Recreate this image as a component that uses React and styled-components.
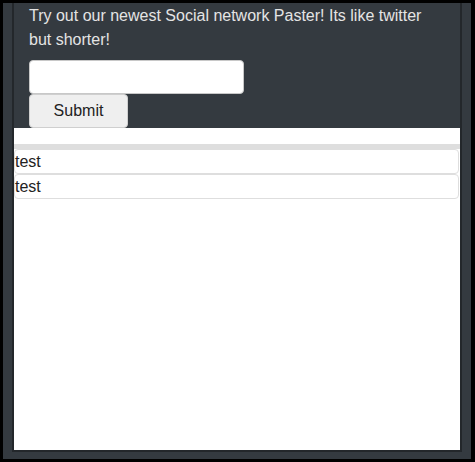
import React from 'react';
import styled, { createGlobalStyle } from 'styled-components';

const GlobalStyle = createGlobalStyle`
  html, body {
    margin: 0;
    padding: 0;
    background: #000;
  }
  body {
    font-family: "Liberation Sans", Arial, sans-serif;
  }
`;

const Frame = styled.div`
  box-sizing: border-box;
  width: 475px;
  height: 462px;
  border: solid #000;
  border-width: 3px 4px 3px 3px;
  background: #343a40;
  padding: 0 9px 7px 9px;
  display: flex;
  flex-direction: column;
`;

const Panel = styled.div`
  flex: 1;
  display: flex;
  flex-direction: column;
  border: 2px solid #23272b;
  border-top: none;
  background: #fff;
`;

const Header = styled.header`
  background: #343a40;
  padding: 1px 15px 0;
`;

const Intro = styled.p`
  margin: 0 0 8px;
  font-size: 16px;
  line-height: 24px;
  color: #e4e4e4;
`;

const Input = styled.input`
  display: block;
  box-sizing: border-box;
  width: 215px;
  height: 34px;
  margin: 0;
  border: 1px solid #c8c8c8;
  border-radius: 4px;
  background: #fff;
  font-size: 16px;
  font-family: inherit;
`;

const Button = styled.button`
  display: block;
  box-sizing: border-box;
  width: 99px;
  height: 34px;
  margin: 0;
  border: 1px solid #cfcfcf;
  border-radius: 4px;
  background: #efefef;
  color: #222;
  font-family: inherit;
  font-size: 16px;
`;

const Feed = styled.ul`
  list-style: none;
  margin: 16px 0 0;
  padding: 0;
  border-top: 5px solid #dedede;
`;

const Post = styled.li`
  margin-right: 1px;
  border: 1px solid #dedede;
  border-radius: 4px;
  font-size: 16px;
  line-height: 23px;
  color: #222;
`;

const posts = ['test', 'test'];

export default function App() {
  return (
    <>
      <GlobalStyle />
      <Frame>
        <Panel>
          <Header>
            <Intro>Try out our newest Social network Paster! Its like twitter but shorter!</Intro>
            <Input type="text" />
            <Button>Submit</Button>
          </Header>
          <Feed>
            {posts.map((p, i) => (
              <Post key={i}>{p}</Post>
            ))}
          </Feed>
        </Panel>
      </Frame>
    </>
  );
}
